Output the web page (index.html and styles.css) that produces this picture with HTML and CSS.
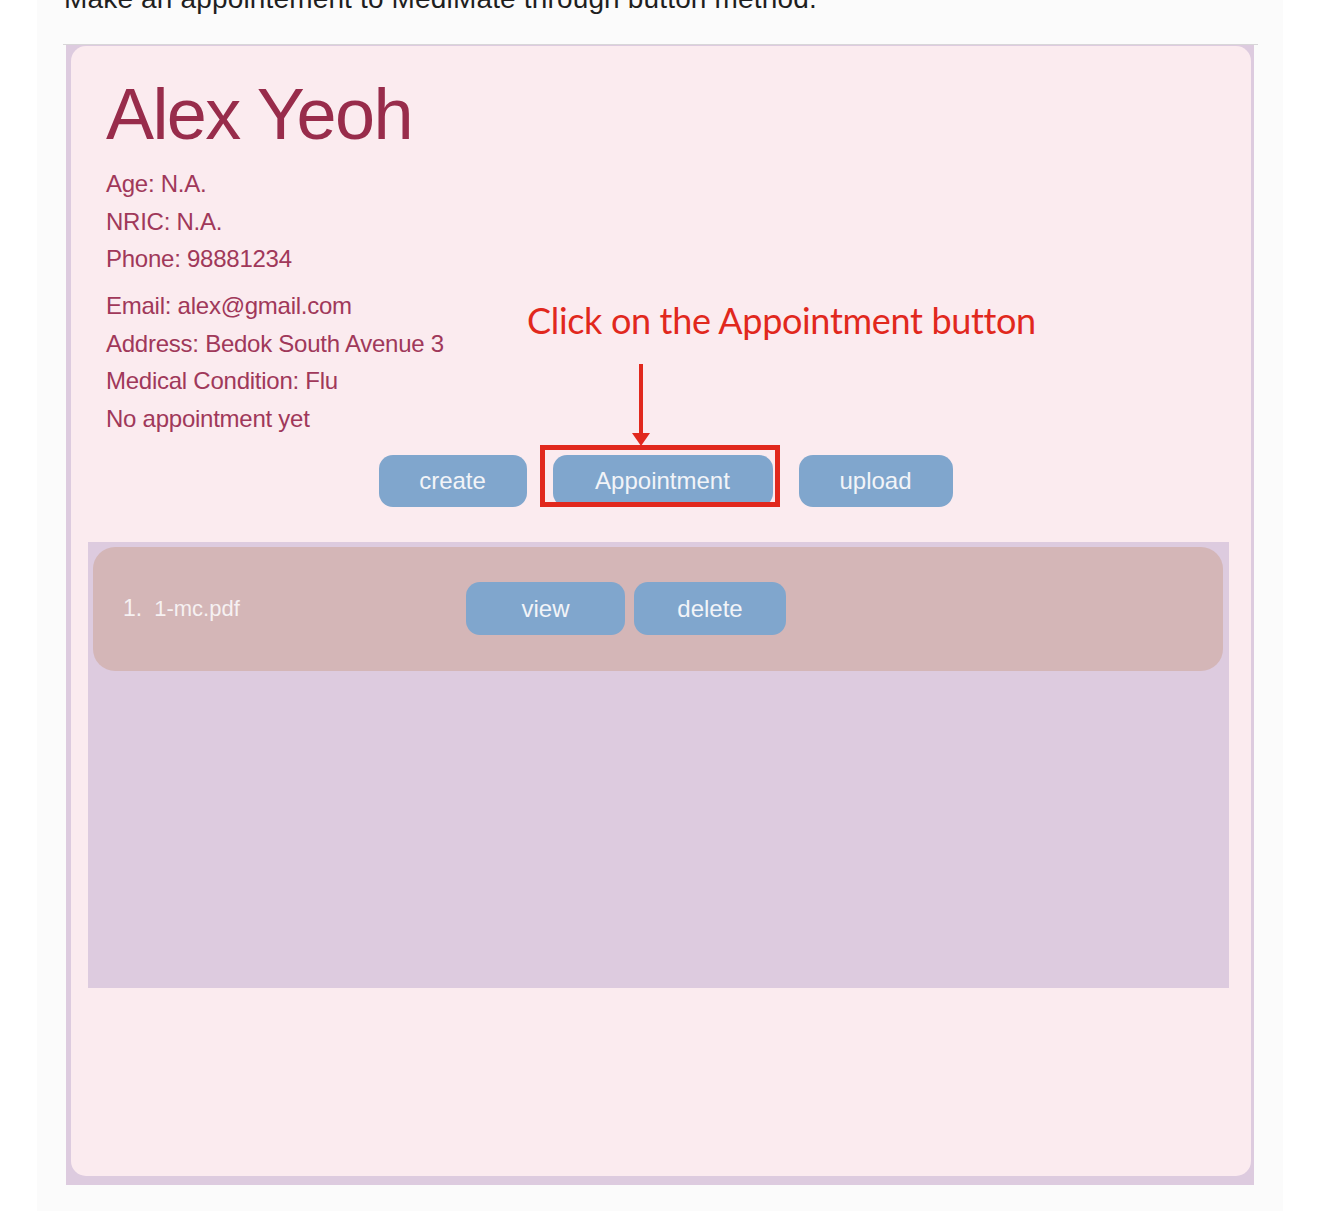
FILE: index.html
```html
<!DOCTYPE html>
<html lang="en">
<head>
<meta charset="utf-8">
<title>MediMate – Make an appointment</title>
<link rel="stylesheet" href="styles.css">
</head>
<body>
<div class="doc">
  <p class="intro">Make an appointement to MediMate through button method.</p>
  <div class="shot">
    <div class="frame">
      <div class="card">
        <h1 class="name">Alex Yeoh</h1>
        <div class="details">
          <div class="line">Age: N.A.</div>
          <div class="line">NRIC: N.A.</div>
          <div class="line">Phone: 98881234</div>
          <div class="line gap">Email: alex@gmail.com</div>
          <div class="line">Address: Bedok South Avenue 3</div>
          <div class="line">Medical Condition: Flu</div>
          <div class="line">No appointment yet</div>
        </div>
        <div class="actions">
          <button class="btn btn-create">create</button>
          <div class="target">
            <button class="btn btn-appt">Appointment</button>
            <span class="highlight"></span>
            <span class="arrow"></span>
          </div>
          <button class="btn btn-upload">upload</button>
        </div>
        <div class="note">Click on the Appointment button</div>
        <div class="files">
          <div class="file-row">
            <div class="file-name"><span class="idx">1.</span><span>1-mc.pdf</span></div>
            <div class="file-actions">
              <button class="btn btn-view">view</button>
              <button class="btn btn-delete">delete</button>
            </div>
          </div>
        </div>
      </div>
    </div>
  </div>
</div>
</body>
</html>
```

FILE: styles.css
```css
html, body {
  margin: 0;
  padding: 0;
  background: #ffffff;
}

.doc {
  margin-left: 37px;
  width: 1246px;
  min-height: 1211px;
  background: #fbfbfb;
  padding-left: 26px;
  box-sizing: border-box;
  overflow: hidden;
}

.intro {
  margin: -15px 0 0 1px;
  font-family: "Liberation Sans", Arial, sans-serif;
  font-size: 28px;
  line-height: 28px;
  letter-spacing: 0.16px;
  color: #1f1f1f;
  height: 59px;
}

.shot {
  width: 1195px;
  border-top: 1px solid #d8d6d8;
}

.frame {
  margin-left: 3px;
  width: 1188px;
  background: #ddcbdf;
  padding: 1px 3px 9px 5px;
  box-sizing: border-box;
}

.card {
  position: relative;
  height: 1130px;
  background: #fbebef;
  border-radius: 15px;
  padding: 32px 22px 0 17px;
  box-sizing: border-box;
  font-family: "Liberation Sans", Arial, sans-serif;
}

.name {
  margin: 0 0 0 18px;
  font-size: 72px;
  line-height: 72px;
  font-weight: normal;
  letter-spacing: -1.6px;
  color: #982c4b;
}

.details {
  margin: 15px 0 0 18px;
  color: #a0385a;
  font-size: 24px;
  letter-spacing: -0.25px;
  line-height: 37.5px;
}

.details .gap {
  margin-top: 9.5px;
}

.actions {
  display: flex;
  justify-content: center;
  gap: 26px;
  margin-top: 17.5px;
  padding-left: 14px;
}

.btn {
  border: none;
  background: #80a6cd;
  color: #f2f4f8;
  font-family: "Liberation Sans", Arial, sans-serif;
  font-size: 24px;
  height: 52px;
  border-radius: 14px;
  padding: 0;
  cursor: pointer;
}

.btn-create { width: 148px; }
.btn-appt { width: 220px; }
.btn-upload { width: 154px; }

.target {
  position: relative;
  display: flex;
}

.highlight {
  position: absolute;
  left: -13px;
  right: -7px;
  top: -10px;
  bottom: 0px;
  border: 5px solid #e1281d;
  pointer-events: none;
}

.arrow {
  position: absolute;
  left: 86px;
  top: -91px;
  width: 4px;
  height: 70px;
  background: #e1281d;
}

.arrow::after {
  content: "";
  position: absolute;
  left: -7px;
  bottom: -12px;
  border-left: 9px solid transparent;
  border-right: 9px solid transparent;
  border-top: 13px solid #e1281d;
}

.note {
  position: absolute;
  left: 456px;
  top: 252px;
  font-family: Lato, "Open Sans", sans-serif;
  font-size: 36px;
  line-height: 44px;
  letter-spacing: -0.33px;
  color: #e1281d;
  white-space: nowrap;
}

.files {
  margin-top: 35px;
  height: 446px;
  background: #ddcbdf;
  padding: 5px 6px 0 5px;
  box-sizing: border-box;
}

.file-row {
  height: 124px;
  background: #d4b6b7;
  border-radius: 22px;
  display: flex;
  align-items: center;
  padding-left: 30px;
  color: #f6f1f2;
}

.file-name {
  width: 343px;
  font-size: 22px;
  display: flex;
  align-items: baseline;
  gap: 12px;
}

.file-name .idx {
  font-size: 23px;
}

.file-actions {
  display: flex;
  gap: 9px;
}

.btn-view { width: 159px; height: 53px; }
.btn-delete { width: 152px; height: 53px; }
```
